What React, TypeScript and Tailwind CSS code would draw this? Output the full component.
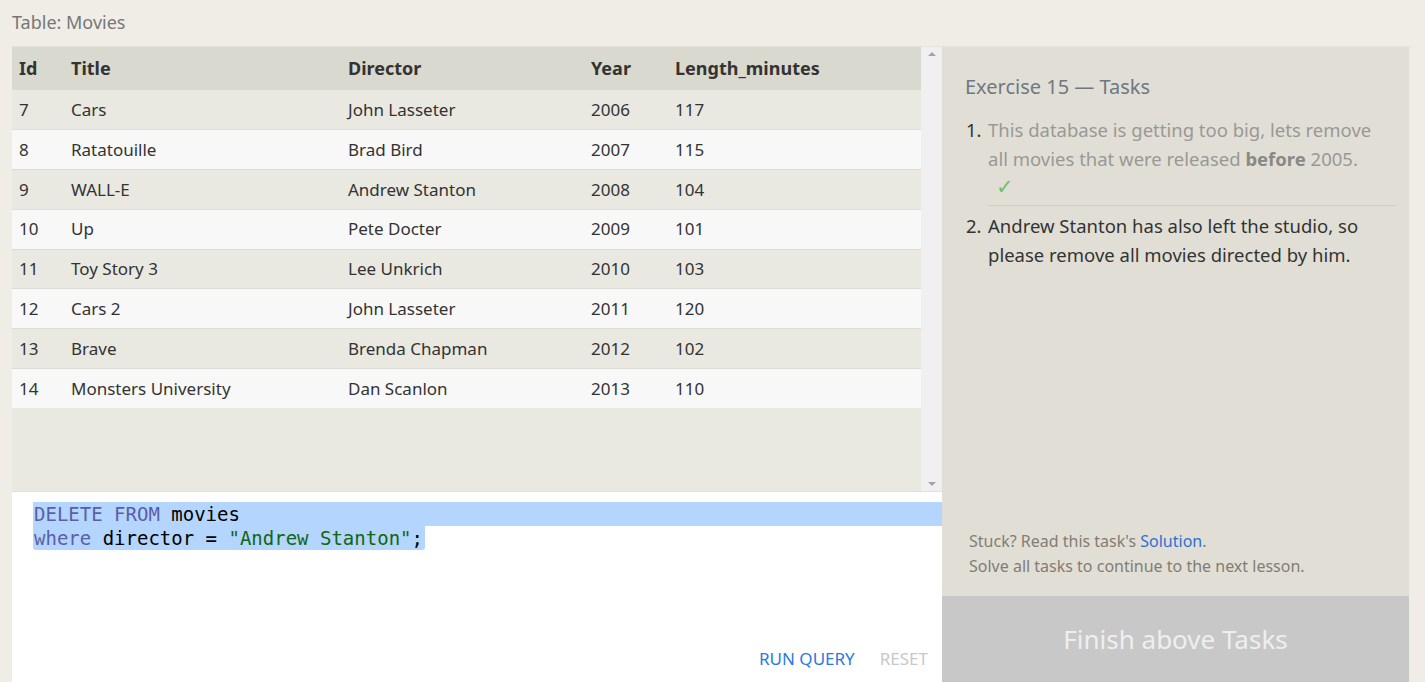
const movies = [
  [7, "Cars", "John Lasseter", 2006, 117],
  [8, "Ratatouille", "Brad Bird", 2007, 115],
  [9, "WALL-E", "Andrew Stanton", 2008, 104],
  [10, "Up", "Pete Docter", 2009, 101],
  [11, "Toy Story 3", "Lee Unkrich", 2010, 103],
  [12, "Cars 2", "John Lasseter", 2011, 120],
  [13, "Brave", "Brenda Chapman", 2012, 102],
  [14, "Monsters University", "Dan Scanlon", 2013, 110],
] as const;

const sans = "font-['Noto_Sans',_'Open_Sans',_sans-serif]";

function Scrollbar() {
  return (
    <div className="w-[21px] bg-[#f0f0f0] flex flex-col items-center justify-between py-[5px]">
      <span className="w-0 h-0 border-x-[4px] border-x-transparent border-b-[4px] border-b-[#a3a3a3]" />
      <span className="w-0 h-0 border-x-[4px] border-x-transparent border-t-[4px] border-t-[#a3a3a3]" />
    </div>
  );
}

function MoviesTable() {
  return (
    <div className="flex h-[444px] bg-[#e9e8e1]">
      <div className="flex-1">
        <table className="w-full text-left text-[#333]">
          <thead>
            <tr className="bg-[#dad9cf] h-[43px] text-[18px] font-bold">
              <th className="pl-[7px] w-[59px]">Id</th>
              <th className="w-[277px]">Title</th>
              <th className="w-[243px]">Director</th>
              <th className="w-[84px]">Year</th>
              <th>Length_minutes</th>
            </tr>
          </thead>
          <tbody className="text-[17px]">
            {movies.map((m, i) => (
              <tr
                key={m[0]}
                className={
                  "h-[39.75px] border-b border-[#dcdcd8] last:border-b-0 " +
                  (i % 2 === 0 ? "bg-[#e9e8e1]" : "bg-[#f8f8f8]")
                }
              >
                <td className="pl-[7px]">{m[0]}</td>
                <td>{m[1]}</td>
                <td>{m[2]}</td>
                <td>{m[3]}</td>
                <td>{m[4]}</td>
              </tr>
            ))}
          </tbody>
        </table>
      </div>
      <Scrollbar />
    </div>
  );
}

function Editor() {
  return (
    <div className="flex-1 bg-white flex flex-col border-t border-[#e3e2da]">
      <div className="pt-[10px] font-['DejaVu_Sans_Mono',_monospace] text-[19px] leading-[24px] text-[#000]">
        <div className="bg-[#b4d5fe] ml-[21px] pl-[1px]">
          <span className="text-[#5a5fa8]">DELETE FROM</span> movies
        </div>
        <div className="ml-[21px] pl-[1px] pr-[2px] bg-[#b4d5fe] inline-block rounded-b-[3px]">
          <span className="text-[#5a5fa8]">where</span> director = <span className="text-[#116611]">"Andrew Stanton"</span>;
        </div>
      </div>
      <div className="mt-auto flex justify-end gap-[25px] pr-[14px] pb-[11px] text-[17px]">
        <button className="text-[#2a7ae2]">RUN QUERY</button>
        <button className="text-[#c8c8c8]">RESET</button>
      </div>
    </div>
  );
}

function Tasks() {
  return (
    <div className="w-[467px] bg-[#e1dfd5] flex flex-col">
      <div className="pl-[23px] pr-[13px] pt-[25px]">
        <h2 className="text-[20px] text-[#6f7782]">Exercise 15 — Tasks</h2>
        <ol className="mt-[13px] text-[18.5px] leading-[29px]">
          <li className="flex pb-[6px] border-b border-[#cfcdc2] ml-[23px]">
            <span className="w-0 -ml-[22px] pr-[22px] text-[#333]">1.</span>
            <div className="text-[#9a9895] pr-[12px]">
              This database is getting too big, lets remove all movies that were released <b className="text-[#8a8885]">before</b> 2005.
              <div className="text-[#6ec16e] pl-[8px] text-[21px] leading-[26px]">✓</div>
            </div>
          </li>
          <li className="flex pt-[5px] ml-[23px] text-[#333]">
            <span className="w-0 -ml-[22px] pr-[22px]">2.</span>
            <div>Andrew Stanton has also left the studio, so please remove all movies directed by him.</div>
          </li>
        </ol>
      </div>
      <div className="mt-auto px-[27px] pb-[17px] text-[16px] leading-[25px] text-[#837c74]">
        <p>
          Stuck? Read this task's <a className="text-[#2f6fd6]">Solution</a>.
        </p>
        <p>Solve all tasks to continue to the next lesson.</p>
      </div>
      <div className="h-[86px] bg-[#c8c8c8] flex items-center justify-center text-[26px] text-[#efefef]">
        Finish above Tasks
      </div>
    </div>
  );
}

export default function App() {
  return (
    <div className={`${sans} bg-[#efede6] w-[1425px] h-[682px] overflow-hidden`}>
      <div className="px-[12px] pt-[10px] pb-[12px] text-[18px] text-[#777] leading-[24px]">Table: Movies</div>
      <div className="mx-[12px] flex h-[636px] border-t border-[#e5e3dc]">
        <div className="w-[930px] flex flex-col">
          <MoviesTable />
          <Editor />
        </div>
        <Tasks />
      </div>
    </div>
  );
}
